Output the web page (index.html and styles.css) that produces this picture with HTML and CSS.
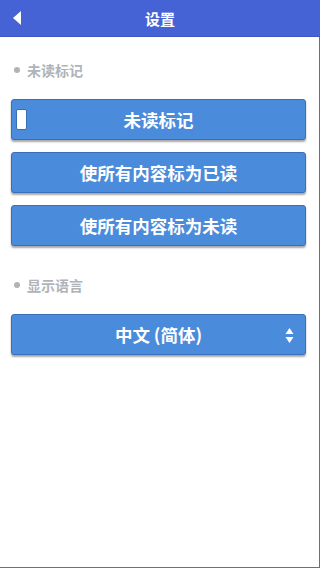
FILE: index.html
```html
<!DOCTYPE html>
<html>
<head>
	<meta charset="UTF-8">
	<title>设置</title>
	<link rel="stylesheet" href="styles.css">
</head>
<body>
	<div class="header">
		<span class="back"></span>
		<h1>设置</h1>
	</div>

	<div id="content">
		<div class="label"><span class="dot"></span>未读标记</div>

		<div class="btn">
			<span class="check"></span>
			未读标记
		</div>
		<div class="btn">使所有内容标为已读</div>
		<div class="btn">使所有内容标为未读</div>

		<div class="label label_lang"><span class="dot"></span>显示语言</div>

		<div class="btn select">
			中文 (简体)
			<span class="arrows">
				<svg width="9" height="17" viewBox="0 0 9 17">
					<path d="M4.5 1 L8.5 7 L0.5 7 Z" fill="#fff"/>
					<path d="M0.5 10 L8.5 10 L4.5 16 Z" fill="#fff"/>
				</svg>
			</span>
		</div>
	</div>
</body>
</html>
```

FILE: styles.css
```css
html, body {
	height: 100%;
}

body {
	margin: 0;
	padding: 0;
	font-family: "Noto Sans CJK SC", "Noto Sans", sans-serif;
	background: #fff;
	display: flex;
	flex-direction: column;
}

.header {
	height: 36px;
	background: #4663d6;
	border-bottom: 1px solid #3d57c2;
	display: flex;
	align-items: center;
	justify-content: center;
	position: relative;
}

.header h1 {
	margin: 0;
	color: #fff;
	font-size: 15px;
	font-weight: bold;
}

.back {
	position: absolute;
	left: 13px;
	top: 11px;
	width: 0;
	height: 0;
	border-top: 7px solid transparent;
	border-bottom: 7px solid transparent;
	border-right: 8px solid #fff;
}

#content {
	flex: 1;
	border-right: 1px solid #707070;
	border-bottom: 1px solid #707070;
	padding: 23px 13px 0 11px;
}

.label {
	display: flex;
	align-items: center;
	height: 20px;
	font-size: 14px;
	font-weight: bold;
	color: #b0b3b7;
	margin: 0 0 19px 3px;
}

.label_lang {
	margin-top: 29px;
}

.dot {
	width: 6px;
	height: 6px;
	border-radius: 50%;
	background: #b0b3b7;
	margin-right: 7px;
}

.btn {
	position: relative;
	height: 39px;
	margin-bottom: 12px;
	background: #4a8bdb;
	border: 1px solid #3b6fb5;
	border-radius: 3px;
	box-shadow: 0 2px 2px rgba(0, 0, 0, 0.35);
	color: #fff;
	font-size: 17.5px;
	font-weight: bold;
	display: flex;
	align-items: center;
	justify-content: center;
}

.check {
	position: absolute;
	left: 4px;
	top: 9px;
	width: 9px;
	height: 19px;
	background: #fff;
	border: 1px solid #3b6fb5;
	border-radius: 2px;
}

.arrows {
	position: absolute;
	right: 11px;
	top: 12px;
	height: 17px;
}

.arrows svg {
	display: block;
}
```
